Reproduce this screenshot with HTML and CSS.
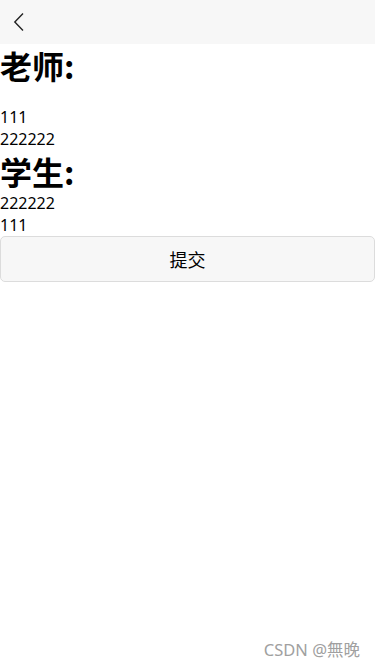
FILE: index.html
```html
<!DOCTYPE html>
<html lang="zh-CN">
<head>
<meta charset="utf-8">
<meta name="viewport" content="width=device-width, initial-scale=1">
<link rel="stylesheet" href="styles.css">
</head>
<body>
<header class="navbar">
  <button class="back" aria-label="返回">
    <svg width="12" height="20" viewBox="0 0 12 20"><path d="M10 1.5 L1.8 10 L10 18.5" fill="none" stroke="#222" stroke-width="1.4"/></svg>
  </button>
</header>
<main class="content">
  <h1 class="title">老师:</h1>
  <div class="list first">
    <div class="item">111</div>
    <div class="item">222222</div>
  </div>
  <h1 class="title">学生:</h1>
  <div class="list">
    <div class="item">222222</div>
    <div class="item">111</div>
  </div>
  <button class="submit">提交</button>
</main>
<div class="watermark">CSDN @無晚</div>
</body>
</html>
```

FILE: styles.css
```css
html, body {
  margin: 0;
  padding: 0;
  height: 100%;
}
body {
  font-family: "Noto Sans", "Noto Sans CJK SC", sans-serif;
  font-size: 16px;
  color: #000;
  background: #fff;
  position: relative;
}
.navbar {
  height: 44px;
  background: #f7f7f7;
  display: flex;
  align-items: center;
  padding-left: 12px;
}
.back {
  border: 0;
  background: none;
  padding: 0;
  width: 14px;
  height: 22px;
  display: flex;
  align-items: center;
  justify-content: center;
}
.title {
  margin: 0;
  font-size: 32px;
  font-weight: bold;
  line-height: 42px;
  font-family: "Noto Sans CJK SC", sans-serif;
}
.list {
  display: flex;
  flex-direction: column;
}
.list.first {
  margin-top: 20px;
}
.item {
  line-height: 22px;
}
.submit {
  display: block;
  width: 100%;
  height: 46px;
  margin: 0;
  background: #f7f7f7;
  border: 1px solid #dcdcdc;
  border-radius: 5px;
  font-family: "Noto Sans CJK SC", sans-serif;
  font-size: 18px;
  color: #000;
}
.watermark {
  position: absolute;
  right: 15px;
  bottom: 6px;
  color: #a0a0a0;
  font-size: 16.5px;
  font-family: "Noto Sans", "Noto Sans CJK SC", sans-serif;
}
```
